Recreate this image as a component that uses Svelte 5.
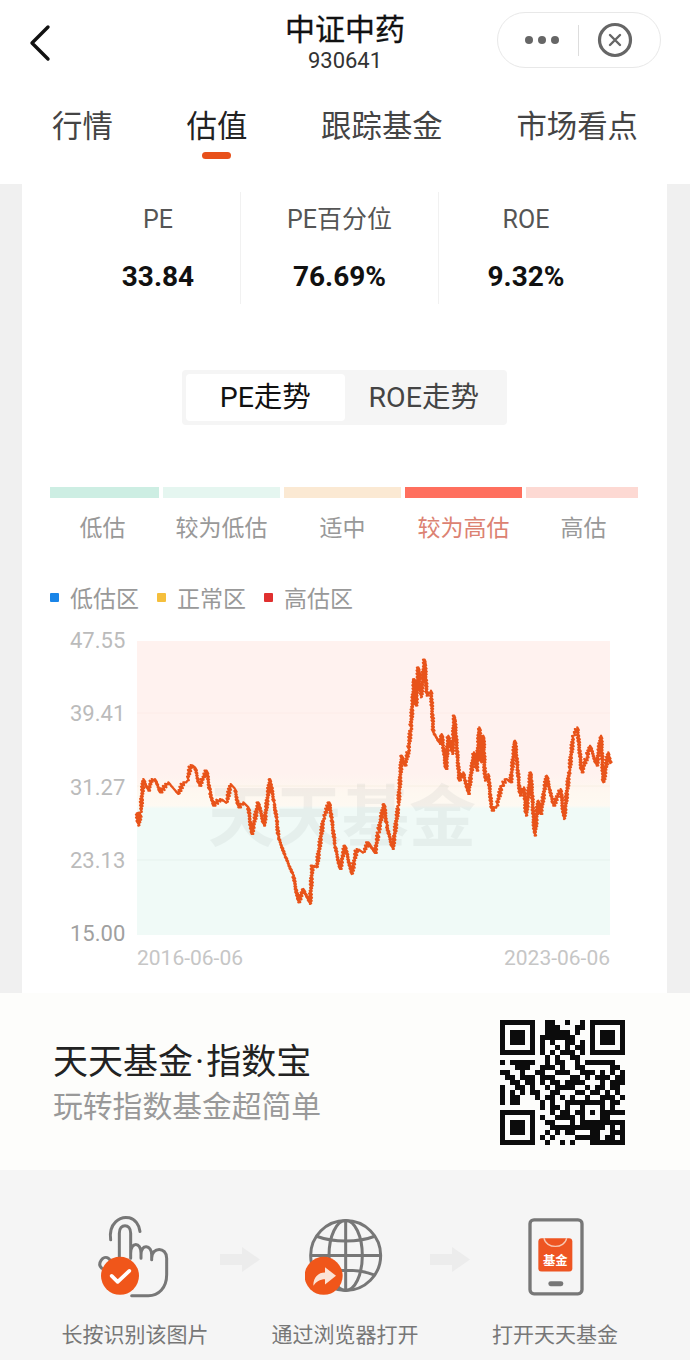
<script>
  const tabs = ['行情', '估值', '跟踪基金', '市场看点'];
  const stats = [
    { label: 'PE', value: '33.84' },
    { label: 'PE百分位', value: '76.69%' },
    { label: 'ROE', value: '9.32%' }
  ];
  const bands = [
    { label: '低估', w: 109, color: '#cdeee3' },
    { label: '较为低估', w: 117, color: '#e5f6f0' },
    { label: '适中', w: 117, color: '#fbe9d3' },
    { label: '较为高估', w: 117, color: '#ff6f5e', on: true },
    { label: '高估', w: 112, color: '#fdd9d3' }
  ];
  const legend = [
    { label: '低估区', color: '#1a85e8' },
    { label: '正常区', color: '#f5bf3c' },
    { label: '高估区', color: '#e0302f' }
  ];
  const yLabels = [['47.55', 641], ['39.41', 714], ['31.27', 788], ['23.13', 861], ['15.00', 934]];

  // traced from the reference: first list starts at x=130, second at x=370, both 3x
  const left = [[20,550],[25,590],[32,550],[40,450],[55,485],[65,450],[75,450],[90,490],[115,460],[130,478],[145,495],[160,460],[172,455],[182,408],[195,415],[208,470],[230,425],[240,490],[250,530],[270,510],[290,520],[302,465],[315,480],[325,535],[340,520],[355,535],[365,615],[385,520],[402,590],[420,450],[432,520],[440,570],[445,625],[465,680],[490,740],[505,820],[520,780],[540,825],[547,710],[560,715],[580,570],[598,520],[605,570],[615,650],[630,720],[645,650],[665,735],[680,660],[700,670],[715,640],[735,670]];
  const right = [[0,650],[15,672],[25,610],[42,525],[50,590],[68,660],[85,530],[95,380],[105,410],[115,365],[122,300],[133,150],[138,230],[145,115],[153,205],[164,92],[170,200],[183,185],[190,310],[210,345],[215,315],[228,420],[235,320],[247,375],[253,260],[268,455],[280,430],[295,495],[312,370],[320,425],[328,295],[334,400],[340,320],[345,455],[355,435],[365,545],[380,530],[395,470],[410,450],[422,460],[435,335],[450,500],[462,475],[468,560],[482,430],[494,620],[505,515],[512,555],[530,440],[550,530],[572,480],[582,570],[598,425],[610,320],[622,295],[635,430],[650,385],[660,350],[680,410],[693,320],[700,460],[715,370],[722,405]];
  const traced = [
    ...left.map(([x, y]) => [130 + x / 3, 630 + y / 3]),
    ...right.map(([x, y]) => [370 + x / 3, 630 + y / 3])
  ];

  function buildLine(pts) {
    const out = [];
    pts.forEach((p, i) => {
      out.push(p);
      const next = pts[i + 1];
      if (!next) return;
      const dist = Math.hypot(next[0] - p[0], next[1] - p[1]);
      const steps = Math.max(2, Math.floor(dist / 1.5));
      for (let s = 1; s < steps; s++) {
        const t = s / steps;
        const n = (s % 2 ? 1 : -1) * (1.2 + Math.abs(Math.sin(s * 12.9 + i * 78.2)) * 1.3);
        out.push([p[0] + (next[0] - p[0]) * t + n * 0.6, p[1] + (next[1] - p[1]) * t + n * 0.6]);
      }
    });
    return out.map(([x, y]) => x.toFixed(1) + ',' + y.toFixed(1)).join(' ');
  }
  const line = buildLine(traced);

  const qrRows = [
    '1111111001100100101111111',
    '1000001001110001101000001',
    '1011101001111101001011101',
    '1011101011111110001011101',
    '1011101010100110101011101',
    '1000001010010101101000001',
    '1111111010101110101111111',
    '0000000001010011000000000',
    '1011111001011001011111100',
    '0001110011101001100000110',
    '1100100110011100111010101',
    '0110111011100011010111011',
    '0011011010110111100010111',
    '1001101001011110010110110',
    '1010101100110001101101010',
    '1011000101101010010011101',
    '1011000010100111111110110',
    '0000000010110100100010100',
    '1111111000101101101011111',
    '1000001010011110100011000',
    '1011101001100010111111111',
    '1011101000111111111110101',
    '1011101001010110001100111',
    '1000001010100001111101101',
    '1111111001001010001111111'
  ];
  const qrPath = qrRows
    .map((row, y) =>
      [...row].map((c, x) => (c === '1' ? `M${x} ${y}h1v1h-1z` : '')).join('')
    )
    .join('');
</script>

<div class="page">
  <header class="nav">
    <div class="back">
      <svg width="24" height="38" viewBox="0 0 24 38">
        <path d="M20 3 L4 19 L20 35" fill="none" stroke="#111" stroke-width="3.4" stroke-linecap="round" stroke-linejoin="round" />
      </svg>
    </div>
    <div class="title">
      <div class="name">中证中药</div>
      <div class="code">930641</div>
    </div>
    <div class="capsule-wrap">
      <div class="capsule">
        <span class="dots"><i></i><i></i><i></i></span>
        <span class="sep"></span>
        <svg width="36" height="36" viewBox="0 0 36 36">
          <circle cx="18" cy="18" r="15.5" fill="none" stroke="#666" stroke-width="3.2" />
          <path d="M13 13 L23 23 M23 13 L13 23" stroke="#666" stroke-width="2.4" stroke-linecap="round" />
        </svg>
      </div>
    </div>
  </header>

  <nav class="tabs">
    {#each tabs as tab, i}
      <div class="tab" class:active={i === 1}>{tab}</div>
    {/each}
  </nav>

  <main class="body">
    <section class="card">
      <div class="stats">
        {#each stats as s}
          <div class="stat">
            <div class="stat-label">{s.label}</div>
            <div class="stat-value">{s.value}</div>
          </div>
        {/each}
      </div>

      <div class="switch">
        <div class="switch-item on">PE走势</div>
        <div class="switch-item">ROE走势</div>
      </div>

      <div class="bands">
        {#each bands as b}
          <div class="band" style="width: {b.w}px">
            <div class="band-bar" style="background: {b.color}"></div>
            <div class="band-label" class:hot={b.on}>{b.label}</div>
          </div>
        {/each}
      </div>

      <div class="legend">
        {#each legend as l}
          <div class="legend-item">
            <span class="swatch" style="background: {l.color}"></span>{l.label}
          </div>
        {/each}
      </div>

      <svg class="chart" width="645" height="350" viewBox="22 625 645 350">
        <defs>
          <linearGradient id="zones" x1="0" y1="642" x2="0" y2="936" gradientUnits="userSpaceOnUse">
            <stop offset="0" stop-color="#fff2ef" />
            <stop offset="0.45" stop-color="#fff2ef" />
            <stop offset="0.52" stop-color="#fef8f0" />
            <stop offset="0.56" stop-color="#fef9f2" />
            <stop offset="0.57" stop-color="#f0faf7" />
            <stop offset="1" stop-color="#f0faf7" />
          </linearGradient>
        </defs>
        <rect x="137" y="642" width="473" height="294" fill="url(#zones)" />
        <line x1="137" y1="714" x2="610" y2="714" stroke="#fdece8" />
        <line x1="137" y1="787" x2="610" y2="787" stroke="#f8f0e4" />
        <line x1="137" y1="861" x2="610" y2="861" stroke="#e6f1ed" />
        <text class="mark" x="208" y="842">天天基金</text>
        {#each yLabels as [t, y], i}
          <text class="ylabel" class:low={i === 4} x="70" y={y + 8}>{t}</text>
        {/each}
        <text class="date" x="137" y="966">2016-06-06</text>
        <text class="date" x="504" y="966">2023-06-06</text>
        <polyline points={line} fill="none" stroke="#e8531a" stroke-width="2.2" stroke-linejoin="round" />
      </svg>
    </section>
  </main>

  <section class="promo">
    <div class="promo-text">
      <div class="promo-title">天天基金<span class="dot">·</span>指数宝</div>
      <div class="promo-sub">玩转指数基金超简单</div>
    </div>
    <svg class="qr" width="125" height="125" viewBox="0 0 25 25" shape-rendering="crispEdges">
      <path d={qrPath} fill="#0c0c0c" />
    </svg>
  </section>

  <section class="steps">
    <div class="step">
      <svg width="80" height="87" viewBox="165 70 240 260">
        <g fill="none" stroke="#777" stroke-width="9" stroke-linecap="round" stroke-linejoin="round">
          <path d="M212 150 C205 100 240 78 268 84 C285 88 298 105 300 125" />
          <path d="M238 225 V130 C238 100 272 100 272 130 V205 M272 190 C272 155 303 155 303 190 V205 M303 195 C303 160 335 165 335 195 V210 M335 205 C335 170 380 170 380 205 V255 C380 295 355 318 325 318 H275" />
          <path d="M238 240 L205 205 C190 195 170 220 185 235" />
        </g>
        <circle cx="240" cy="258" r="57" fill="#f0561a" />
        <path d="M215 258 L233 276 L268 243" fill="none" stroke="#fff" stroke-width="11" stroke-linecap="round" stroke-linejoin="round" />
      </svg>
      <div class="step-label">长按识别该图片</div>
    </div>
    <div class="arrow">
      <svg width="40" height="25" viewBox="0 0 40 25"><path d="M0 7 H22 V0 L40 12.5 L22 25 V18 H0 Z" fill="#ececec" /></svg>
    </div>
    <div class="step">
      <svg width="80" height="87" viewBox="795 70 240 260">
        <g fill="none" stroke="#777" stroke-width="9">
          <circle cx="917" cy="197" r="105" />
          <ellipse cx="917" cy="197" rx="50" ry="105" />
          <path d="M917 92 V302 M812 197 H1022 M832 140 C880 158 955 158 1002 140 M832 255 C880 237 955 237 1002 255" />
        </g>
        <circle cx="851" cy="258" r="57" fill="#f0561a" />
        <path d="M820 288 C820 262 835 248 855 248 V232 L888 258 L855 284 V268 C840 268 828 275 820 288 Z" fill="#fbe3d6" />
      </svg>
      <div class="step-label">通过浏览器打开</div>
    </div>
    <div class="arrow">
      <svg width="40" height="25" viewBox="0 0 40 25"><path d="M0 7 H22 V0 L40 12.5 L22 25 V18 H0 Z" fill="#ececec" /></svg>
    </div>
    <div class="step">
      <svg width="80" height="87" viewBox="285 70 240 260">
        <rect x="330" y="90" width="156" height="222" rx="12" fill="none" stroke="#777" stroke-width="10" />
        <rect x="355" y="145" width="102" height="100" rx="10" fill="#ee5522" />
        <path d="M372 145 C378 178 434 178 440 145" fill="none" stroke="#f6c9b4" stroke-width="4" />
        <text class="app" x="406" y="226">基金</text>
        <rect x="385" y="274" width="45" height="15" rx="7" fill="#777" />
      </svg>
      <div class="step-label">打开天天基金</div>
    </div>
  </section>
</div>

<style>
  :global(body) {
    margin: 0;
    background: #fff;
  }

  .page {
    width: 690px;
    height: 1360px;
    overflow: hidden;
    font-family: "Noto Sans CJK SC", "Noto Sans", sans-serif;
    color: #333;
  }

  .nav {
    display: grid;
    grid-template-columns: 1fr auto 1fr;
    height: 90px;
  }

  .back {
    padding: 24px 0 0 28px;
  }

  .title {
    padding-top: 9px;
    text-align: center;
  }

  .name {
    font-size: 30px;
    line-height: 36px;
    color: #111;
    -webkit-text-stroke: 0.3px #111;
  }

  .code {
    font-family: Roboto, sans-serif;
    font-size: 22px;
    line-height: 26px;
    margin-top: 3px;
    color: #333;
  }

  .capsule-wrap {
    display: flex;
    justify-content: flex-end;
    padding: 12px 29px 0 0;
  }

  .capsule {
    width: 164px;
    height: 56px;
    box-sizing: border-box;
    border: 1px solid #e8e8e8;
    border-radius: 28px;
    display: flex;
    align-items: center;
    padding-left: 27px;
  }

  .dots {
    display: flex;
    gap: 5px;
  }

  .dots i {
    width: 8px;
    height: 8px;
    border-radius: 50%;
    background: #666;
  }

  .sep {
    width: 1px;
    height: 31px;
    background: #ddd;
    margin: 0 18px 0 19px;
  }

  .tabs {
    display: flex;
    justify-content: space-between;
    padding: 0 52px;
    height: 94px;
  }

  .tab {
    position: relative;
    font-size: 30.4px;
    line-height: 44px;
    height: 44px;
    margin-top: 12px;
    color: #444;
  }

  .tab.active {
    color: #222;
  }

  .tab.active::after {
    content: '';
    position: absolute;
    left: 15px;
    top: 50px;
    width: 29px;
    height: 7px;
    border-radius: 4px;
    background: #e8501a;
  }

  .body {
    background: #f0f0f0;
    padding: 0 23px 0 22px;
    height: 809px;
  }

  .card {
    background: #fff;
    height: 809px;
    overflow: hidden;
  }

  .stats {
    display: grid;
    grid-template-columns: 165px 198px 174px;
    margin: 8px 0 0 54px;
    height: 112px;
  }

  .stat {
    text-align: center;
    border-right: 1px solid #f1f1f1;
    padding-top: 13px;
  }

  .stat:last-child {
    border-right: none;
  }

  .stat-label {
    font-family: Roboto, "Noto Sans CJK SC", sans-serif;
    font-size: 25px;
    line-height: 30px;
    color: #555;
  }

  .stat-value {
    font-family: Roboto, sans-serif;
    font-size: 28px;
    font-weight: 700;
    line-height: 34px;
    margin-top: 25px;
    color: #111;
  }

  .switch {
    display: flex;
    width: 325px;
    height: 55px;
    box-sizing: border-box;
    padding: 4px;
    margin: 66px 0 0 160px;
    border-radius: 4px;
    background: #f5f5f5;
  }

  .switch-item {
    width: 159px;
    height: 47px;
    line-height: 47px;
    text-align: center;
    font-family: Roboto, "Noto Sans CJK SC", sans-serif;
    font-size: 28.5px;
    color: #444;
  }

  .switch-item.on {
    background: #fff;
    border-radius: 4px;
    color: #111;
  }

  .bands {
    display: flex;
    gap: 4px;
    margin: 62px 0 0 28px;
  }

  .band {
    text-align: center;
  }

  .band-bar {
    height: 11px;
  }

  .band-label {
    font-size: 23px;
    line-height: 32px;
    margin-top: 12px;
    color: #999;
  }

  .band:first-child .band-label {
    padding-right: 4px;
  }

  .band:last-child .band-label {
    padding-left: 3px;
  }

  .band-label.hot {
    color: #dc8272;
  }

  .legend {
    display: flex;
    gap: 18px;
    margin: 39px 0 0 28px;
    height: 32px;
  }

  .legend-item {
    display: flex;
    align-items: center;
    font-size: 23px;
    line-height: 32px;
    color: #999;
  }

  .swatch {
    width: 9px;
    height: 9px;
    border-radius: 1px;
    margin-right: 11px;
  }

  .chart {
    display: block;
    margin-top: 11px;
  }

  .mark {
    font-size: 67px;
    font-weight: 700;
    fill: #5f7070;
    opacity: 0.07;
  }

  .ylabel {
    font-family: Roboto, sans-serif;
    font-size: 22px;
    fill: #bbb;
  }

  .ylabel.low {
    fill: #a0a0a0;
  }

  .date {
    font-family: Roboto, sans-serif;
    font-size: 21px;
    fill: #c6c6c6;
  }

  .app {
    font-size: 37px;
    font-weight: 700;
    fill: #fff;
    text-anchor: middle;
  }

  .promo {
    height: 177px;
    box-sizing: border-box;
    background: #fdfdfb;
    display: flex;
    justify-content: space-between;
    padding: 27px 65px 0 53px;
  }

  .promo-title {
    font-size: 35px;
    line-height: 46px;
    margin-top: 16px;
    color: #222;
  }

  .dot {
    font-family: Roboto, sans-serif;
    padding: 0 2px;
  }

  .promo-sub {
    font-size: 29.8px;
    line-height: 40px;
    margin-top: -2px;
    color: #999;
  }

  .qr {
    display: block;
  }

  .steps {
    height: 190px;
    box-sizing: border-box;
    background: #f5f5f5;
    display: flex;
    padding: 43px 0 0 60px;
  }

  .step {
    width: 150px;
    display: flex;
    flex-direction: column;
    align-items: center;
  }

  .step-label {
    font-size: 21px;
    line-height: 30px;
    margin-top: 18px;
    white-space: nowrap;
    color: #777;
  }

  .arrow {
    width: 60px;
    display: flex;
    justify-content: center;
    padding-top: 34px;
  }

  .arrow svg,
  .step svg {
    display: block;
  }
</style>
